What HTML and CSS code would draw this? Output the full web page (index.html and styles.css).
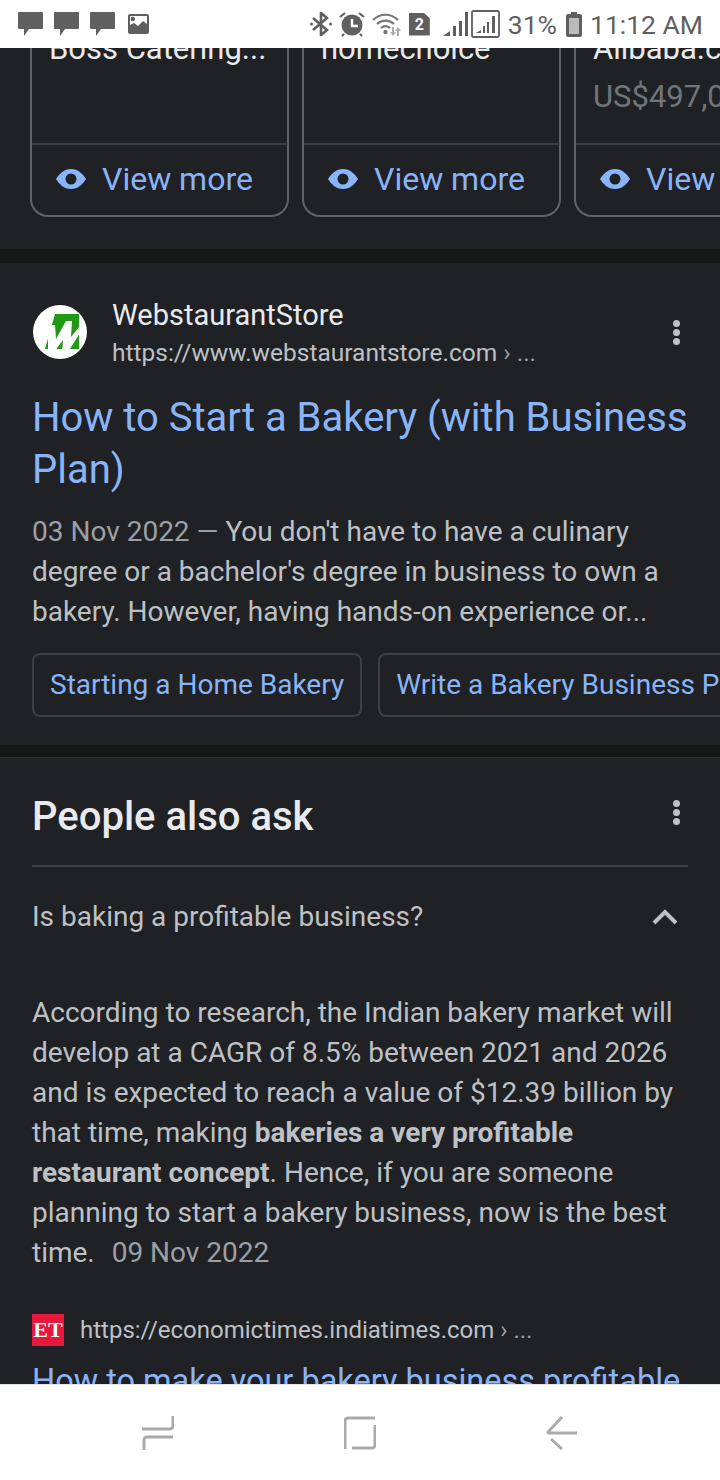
FILE: index.html
```html
<!DOCTYPE html>
<html lang="en">
<head>
<meta charset="UTF-8">
<meta name="viewport" content="width=device-width, initial-scale=1.0">
<title>bakery business - Google Search</title>
<link rel="stylesheet" href="styles.css">
</head>
<body>

<!-- status bar -->
<div class="status-bar">
    <div class="status-left">
        <svg class="ic-msg" viewBox="0 0 25 24"><path d="M1 0h23a1 1 0 0 1 1 1v15a1 1 0 0 1-1 1H11l-5 7v-7H1a1 1 0 0 1-1-1V1a1 1 0 0 1 1-1z"/></svg>
        <svg class="ic-msg" viewBox="0 0 25 24"><path d="M1 0h23a1 1 0 0 1 1 1v15a1 1 0 0 1-1 1H11l-5 7v-7H1a1 1 0 0 1-1-1V1a1 1 0 0 1 1-1z"/></svg>
        <svg class="ic-msg" viewBox="0 0 25 24"><path d="M1 0h23a1 1 0 0 1 1 1v15a1 1 0 0 1-1 1H11l-5 7v-7H1a1 1 0 0 1-1-1V1a1 1 0 0 1 1-1z"/></svg>
        <svg class="ic-pic" viewBox="0 0 21 20"><path fill-rule="evenodd" d="M2 0h17a2 2 0 0 1 2 2v16a2 2 0 0 1-2 2H2a2 2 0 0 1-2-2V2a2 2 0 0 1 2-2zm0 2v9l4-2 4 3 5-5 4 3V2zm5 3a2.2 2.2 0 1 1-4.400 0a2.200 2.200 0 0 1 4.400 0z"/></svg>
    </div>
    <div class="status-right">
        <svg class="ic-bt" viewBox="0 0 22 24"><path d="M3 6l14 12-6 5V1l6 5L3 18" fill="none" stroke="#5f5f5f" stroke-width="2.600"/><circle cx="1.500" cy="12" r="1.500"/><circle cx="20.500" cy="12" r="1.500"/></svg>
        <svg class="ic-alarm" viewBox="0 0 26 26"><circle cx="13" cy="14" r="10.500"/><path d="M13 8v7h6" fill="none" stroke="#fff" stroke-width="2.400"/><path d="M1 6l5-4M25 6l-5-4M5 23l-2 2M21 23l2 2" stroke="#5f5f5f" stroke-width="2.200"/></svg>
        <svg class="ic-wifi" viewBox="0 0 31 24"><g fill="none" stroke="#777" stroke-width="2.200"><path d="M1 8c7-7 18-7 25 0"/><path d="M5 12c5-4.500 12-4.500 17 0"/><path d="M9 16c3-2.500 6-2.500 9 0"/></g><circle cx="13.500" cy="20" r="2.200" fill="#777"/><path d="M20 15h2v5h2l-3 4-3-4h2zM27 24h-2v-5h-2l3-4 3 4h-2z" fill="#aaa"/></svg>
        <span class="sim">2</span>
        <svg class="ic-signal" viewBox="0 0 25 24"><path d="M0 24l7-5v5zM10 24V14h3v10zM16 24V9h3v15zM22 24V0h3v24z"/></svg>
        <svg class="ic-signal-box" viewBox="0 0 29 28"><rect x="1" y="1" width="27" height="26" rx="1.500" fill="none" stroke="#5f5f5f" stroke-width="1.800"/><path d="M5 23l5-3v3zM12 23v-7h2v7zM16 23V12h2v11zM21 23V6h3v17z"/></svg>
        <span class="pct">31%</span>
        <svg class="ic-batt" viewBox="0 0 16 25"><path fill-rule="evenodd" d="M5 0h6v2h3a2 2 0 0 1 2 2v19a2 2 0 0 1-2 2H2a2 2 0 0 1-2-2V4a2 2 0 0 1 2-2h3zM3 6v16h10V6z"/><rect x="3" y="6" width="10" height="16" fill="#bbb"/></svg>
        <span class="clock">11:12 AM</span>
    </div>
</div>

<div class="screen">

    <!-- shopping cards, scrolled partly out of view -->
    <div class="section shop">
        <div class="cards">
            <div class="card">
                <div class="card-body">
                    <div class="card-name">Boss Catering...</div>
                </div>
                <div class="card-foot">
                    <svg class="eye" viewBox="0 0 30 20"><path fill-rule="evenodd" d="M15 0c7 0 12 5 15 10-3 5-8 10-15 10S3 15 0 10C3 5 8 0 15 0zm0 4.500a5.500 5.500 0 1 0 0 11a5.500 5.500 0 0 0 0-11z"/></svg>
                    <span>View more</span>
                </div>
            </div>
            <div class="card">
                <div class="card-body">
                    <div class="card-name">homechoice</div>
                </div>
                <div class="card-foot">
                    <svg class="eye" viewBox="0 0 30 20"><path fill-rule="evenodd" d="M15 0c7 0 12 5 15 10-3 5-8 10-15 10S3 15 0 10C3 5 8 0 15 0zm0 4.500a5.500 5.500 0 1 0 0 11a5.500 5.500 0 0 0 0-11z"/></svg>
                    <span>View more</span>
                </div>
            </div>
            <div class="card">
                <div class="card-body">
                    <div class="card-name">Alibaba.com</div>
                    <div class="card-price">US$497,000</div>
                </div>
                <div class="card-foot">
                    <svg class="eye" viewBox="0 0 30 20"><path fill-rule="evenodd" d="M15 0c7 0 12 5 15 10-3 5-8 10-15 10S3 15 0 10C3 5 8 0 15 0zm0 4.500a5.500 5.500 0 1 0 0 11a5.500 5.500 0 0 0 0-11z"/></svg>
                    <span>View more</span>
                </div>
            </div>
        </div>
    </div>

    <!-- search result -->
    <div class="section result">
        <div class="source">
            <svg class="site-logo" viewBox="0 0 54 54">
                <circle cx="27" cy="27" r="27" fill="#fff"/>
                <path d="M22 9h24v35H12z" fill="#1f9a12"/>
                <path d="M15 20h7l1 14 10-18h6l-1 16 9-11v7L35 47h-6l1-12-9 12h-6z" fill="#fff"/>
            </svg>
            <div class="source-text">
                <div class="site-name">WebstaurantStore</div>
                <div class="site-url">https://www.webstaurantstore.com <span class="crumb">› ...</span></div>
            </div>
            <div class="kebab"><i></i><i></i><i></i></div>
        </div>
        <a class="result-title">How to Start a Bakery (with Business Plan)</a>
        <p class="snippet"><span class="date">03 Nov 2022 — </span>You don't have to have a culinary degree or a bachelor's degree in business to own a bakery. However, having hands-on experience or...</p>
        <div class="chips">
            <a class="chip">Starting a Home Bakery</a>
            <a class="chip">Write a Bakery Business Plan</a>
        </div>
    </div>

    <!-- people also ask -->
    <div class="section paa">
        <div class="paa-head">
            <h2>People also ask</h2>
            <div class="kebab"><i></i><i></i><i></i></div>
        </div>
        <div class="question">
            <span>Is baking a profitable business?</span>
            <svg class="chevron" viewBox="0 0 26 17"><path d="M2 15L13 4l11 11" fill="none" stroke="#bdc1c6" stroke-width="4"/></svg>
        </div>
        <p class="answer">According to research, the Indian bakery market will develop at a CAGR of 8.5% between 2021 and 2026 and is expected to reach a value of $12.39 billion by that time, making <b>bakeries a very profitable restaurant concept</b>. Hence, if you are someone planning to start a bakery business, now is the best time. <span class="date answer-date">09 Nov 2022</span></p>
        <div class="et-source">
            <span class="et-logo">ET</span>
            <span class="site-url">https://economictimes.indiatimes.com <span class="crumb">› ...</span></span>
        </div>
        <a class="paa-link">How to make your bakery business profitable</a>
    </div>
</div>

<!-- android navigation -->
<div class="nav-bar">
    <svg class="nav-ic" viewBox="0 0 32 34"><path d="M31 0v10a3 3 0 0 1-3 3H0M31 21H5a3 3 0 0 0-3 3v10"/></svg>
    <svg class="nav-ic" viewBox="0 0 32 34"><path d="M31 2H4a3 3 0 0 0-3 3v28M31 9v20a3 3 0 0 1-3 3H8"/></svg>
    <svg class="nav-ic" viewBox="0 0 32 34"><path d="M16 1L2 16a1 1 0 0 0 1 1h28M5 23l11 10"/></svg>
</div>

</body>
</html>
```
FILE: styles.css
```css
html, body {
    margin: 0;
    padding: 0;
}
body {
    width: 720px;
    height: 1480px;
    overflow: hidden;
    display: flex;
    flex-direction: column;
    font-family: 'Roboto', sans-serif;
    background-color: #171717;
}

/* status bar */
.status-bar {
    height: 48px;
    flex: none;
    display: flex;
    justify-content: space-between;
    align-items: center;
    background-color: #fff;
    color: #5f5f5f;
    fill: #5f5f5f;
    font-size: 26.500px;
    padding: 0 17px 0 18px;
    box-sizing: border-box;
}
.status-left, .status-right {
    display: flex;
    align-items: center;
}
.ic-msg {
    width: 25px;
    height: 24px;
    margin-right: 11px;
}
.ic-pic {
    width: 21px;
    height: 20px;
    margin: 0 0 0 2px;
}
.ic-bt {
    width: 22px;
    height: 24px;
    margin-right: 7px;
}
.ic-alarm {
    width: 26px;
    height: 26px;
    margin-right: 7px;
}
.ic-wifi {
    width: 31px;
    height: 24px;
    margin-right: 6px;
}
.sim {
    width: 21px;
    height: 23px;
    background-color: #5f5f5f;
    color: #fff;
    font-size: 16px;
    font-weight: bold;
    line-height: 24px;
    text-align: center;
    margin-right: 13px;
    clip-path: polygon(0 0, 70% 0, 100% 25%, 100% 100%, 0 100%);
}
.ic-signal {
    width: 25px;
    height: 24px;
    margin-right: 3px;
}
.ic-signal-box {
    width: 29px;
    height: 28px;
    margin-right: 8px;
}
.pct {
    margin-right: 9px;
}
.ic-batt {
    width: 16px;
    height: 25px;
    margin-right: 8px;
}

/* main scroll area */
.screen {
    flex: 1;
    min-height: 0;
    overflow: hidden;
    display: flex;
    flex-direction: column;
    gap: 14px;
}
.section {
    flex: none;
    background-color: #202124;
}

/* shopping cards */
.shop {
    padding-bottom: 32px;
    margin-top: -33px;
    overflow: hidden;
}
.cards {
    display: flex;
    gap: 13px;
    padding-left: 30px;
}
.card {
    flex: none;
    width: 259px;
    box-sizing: border-box;
    border: 2px solid #5f6368;
    border-radius: 18px;
}
.card-body {
    height: 126px;
    box-sizing: border-box;
    padding: 12px 17px 0;
}
.card-name {
    font-size: 31px;
    line-height: 40px;
    color: #e8eaed;
    white-space: nowrap;
}
.card-price {
    margin-top: 8px;
    font-size: 31px;
    line-height: 40px;
    color: #70757a;
    white-space: nowrap;
}
.card-foot {
    height: 68px;
    padding: 0 0 2px 24px;
    border-top: 2px solid #3c4043;
    display: flex;
    align-items: center;
    gap: 16px;
    font-size: 32px;
    color: #8ab4f8;
    white-space: nowrap;
}
.eye {
    width: 30px;
    height: 20px;
    fill: #8ab4f8;
    flex: none;
}

/* result */
.result {
    padding: 42px 0 28px 32px;
}
.source {
    display: flex;
    align-items: center;
    height: 54px;
    padding-right: 40px;
}
.site-logo {
    width: 54px;
    height: 54px;
    flex: none;
    margin: 0 25px 0 1px;
}
.source-text {
    flex: 1;
    margin-top: 5px;
}
.site-name {
    font-size: 29px;
    line-height: 36px;
    color: #e8eaed;
}
.site-url {
    font-size: 24.500px;
    line-height: 40px;
    color: #bdc1c6;
}
.crumb {
    color: #9aa0a6;
}
.kebab {
    display: flex;
    flex-direction: column;
    gap: 2px;
}
.kebab i {
    display: block;
    width: 7px;
    height: 7px;
    border-radius: 50%;
    background-color: #bdc1c6;
}
.result-title {
    display: block;
    margin: 33px 32px 0 0;
    font-size: 40px;
    line-height: 52px;
    color: #8ab4f8;
}
.snippet {
    margin: 16px 32px 0 0;
    font-size: 28px;
    line-height: 40px;
    color: #bdc1c6;
}
.date {
    color: #9aa0a6;
}
.chips {
    display: flex;
    gap: 16px;
    margin-top: 21px;
    overflow: hidden;
}
.chip {
    flex: none;
    height: 64px;
    box-sizing: border-box;
    padding: 0 16px;
    border: 2px solid #3c4043;
    border-radius: 8px;
    font-size: 28px;
    line-height: 60px;
    color: #8ab4f8;
    white-space: nowrap;
}

/* people also ask */
.paa {
    padding: 0 32px;
    border-top: 1px solid #303134;
    margin-top: -2px;
}
.paa-head {
    height: 107px;
    display: flex;
    justify-content: space-between;
    align-items: center;
    padding-right: 8px;
    border-bottom: 2px solid #3c4043;
}
.paa-head h2 {
    margin: 0;
    padding-top: 9px;
    font-size: 40px;
    font-weight: 500;
    color: #e8eaed;
}
.paa-head .kebab {
    margin-top: 2px;
}
.question {
    height: 98px;
    display: flex;
    justify-content: space-between;
    align-items: center;
    padding-right: 10px;
    font-size: 28px;
    color: #bdc1c6;
}
.chevron {
    width: 26px;
    height: 17px;
}
.answer {
    margin: 0;
    padding-top: 28px;
    font-size: 28px;
    line-height: 40px;
    color: #bdc1c6;
}
.answer b {
    font-weight: bold;
}
.answer-date {
    margin-left: 10px;
}
.et-source {
    display: flex;
    align-items: center;
    gap: 16px;
    margin-top: 37px;
}
.et-source .site-url {
    font-size: 24px;
}
.et-logo {
    width: 32px;
    height: 32px;
    background-color: #e8173c;
    color: #fff;
    font-family: 'Liberation Serif', serif;
    font-size: 22px;
    font-weight: bold;
    line-height: 32px;
    text-align: center;
}
.paa-link {
    display: block;
    margin-top: 11px;
    font-size: 32.500px;
    line-height: 40px;
    color: #8ab4f8;
    white-space: nowrap;
}

/* navigation */
.nav-bar {
    height: 96px;
    flex: none;
    box-sizing: border-box;
    display: flex;
    justify-content: center;
    align-items: center;
    gap: 170px;
    background-color: #fff;
    border-top: 1px solid #e4e4e4;
}
.nav-ic {
    width: 32px;
    height: 34px;
    fill: none;
    stroke: #aaa;
    stroke-width: 3;
}
```
